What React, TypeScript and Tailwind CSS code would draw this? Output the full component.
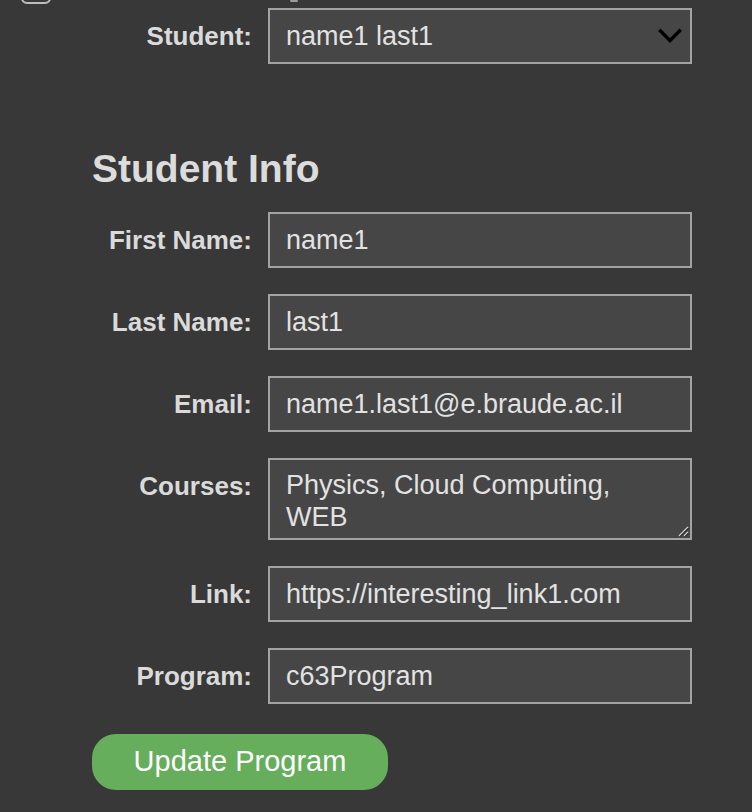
import React from "react";

const labelCls =
  "w-[160px] shrink-0 text-right font-bold text-[26px] text-[#dadada] leading-[56px] h-[56px] whitespace-nowrap";
const boxCls =
  "ml-[16px] w-[424px] h-[56px] shrink-0 bg-[#464646] border-2 border-[#a3a3a3] pl-[16px] pr-[12px] flex items-center text-[27px] text-[#e2e2e2]";

function Row({ label, value }: { label: string; value: string }) {
  return (
    <div className="flex items-start">
      <div className={labelCls}>{label}</div>
      <div className={boxCls}>
        <span className="whitespace-nowrap">{value}</span>
      </div>
    </div>
  );
}

export default function App() {
  return (
    <div
      className="min-h-screen bg-[#383838] overflow-hidden"
      style={{ fontFamily: '"Liberation Sans", Arial, sans-serif' }}
    >
      {/* top strip with cut-off elements */}
      <div className="h-[8px] overflow-hidden flex items-end pb-[4px]">
        <div className="ml-[21px] w-[30px] h-[30px] shrink-0 border-2 border-[#bdbdbd] rounded-[6px]" />
        <div className="ml-[239px] w-[8px] h-[2px] self-start bg-[#9a9a9a] rounded-full" />
      </div>

      <div className="pl-[92px]">
        {/* Student select */}
        <div className="flex items-start">
          <div className={labelCls}>Student:</div>
          <div className="ml-[16px] w-[424px] h-[56px] shrink-0 bg-[#464646] border-2 border-[#a3a3a3] pl-[16px] pr-[8px] flex items-center justify-between text-[27px] text-[#e2e2e2]">
            <span className="whitespace-nowrap">name1 last1</span>
            <svg width="24" height="16" viewBox="0 0 24 16" fill="none">
              <path
                d="M2.5 3 L12 12.5 L21.5 3"
                stroke="#000"
                strokeWidth="3.4"
                strokeLinecap="square"
              />
            </svg>
          </div>
        </div>

        <h2 className="mt-[82px] mb-[21px] text-[39px] leading-[45px] font-bold text-[#dcdcdc]">
          Student Info
        </h2>

        <div className="flex flex-col gap-[26px]">
          <Row label="First Name:" value="name1" />
          <Row label="Last Name:" value="last1" />
          <Row label="Email:" value="name1.last1@e.braude.ac.il" />

          <div className="flex items-start">
            <div className={labelCls}>Courses:</div>
            <div className="relative ml-[16px] w-[424px] h-[82px] shrink-0 bg-[#464646] border-2 border-[#a3a3a3] pl-[16px] pr-[12px] pt-[9px] text-[27px] leading-[32px] text-[#e2e2e2]">
              <div className="whitespace-nowrap">Physics, Cloud Computing,</div>
              <div>WEB</div>
              <svg
                width="12"
                height="12"
                viewBox="0 0 12 12"
                className="absolute right-[1px] bottom-[1px]"
              >
                <path d="M11 2 L2 11" stroke="#cfcfcf" strokeWidth="1.5" />
                <path d="M11 7 L7 11" stroke="#cfcfcf" strokeWidth="1.5" />
                <path d="M11.5 3 L3 11.5" stroke="#1a1a1a" strokeWidth="1" />
                <path d="M11.5 8 L8 11.5" stroke="#1a1a1a" strokeWidth="1" />
              </svg>
            </div>
          </div>

          <Row label="Link:" value="https://interesting_link1.com" />
          <Row label="Program:" value="c63Program" />
        </div>

        <button className="mt-[30px] w-[296px] h-[56px] rounded-[24px] bg-[#66ad5c] text-white text-[29px] flex items-center justify-center">
          Update Program
        </button>
      </div>
    </div>
  );
}
